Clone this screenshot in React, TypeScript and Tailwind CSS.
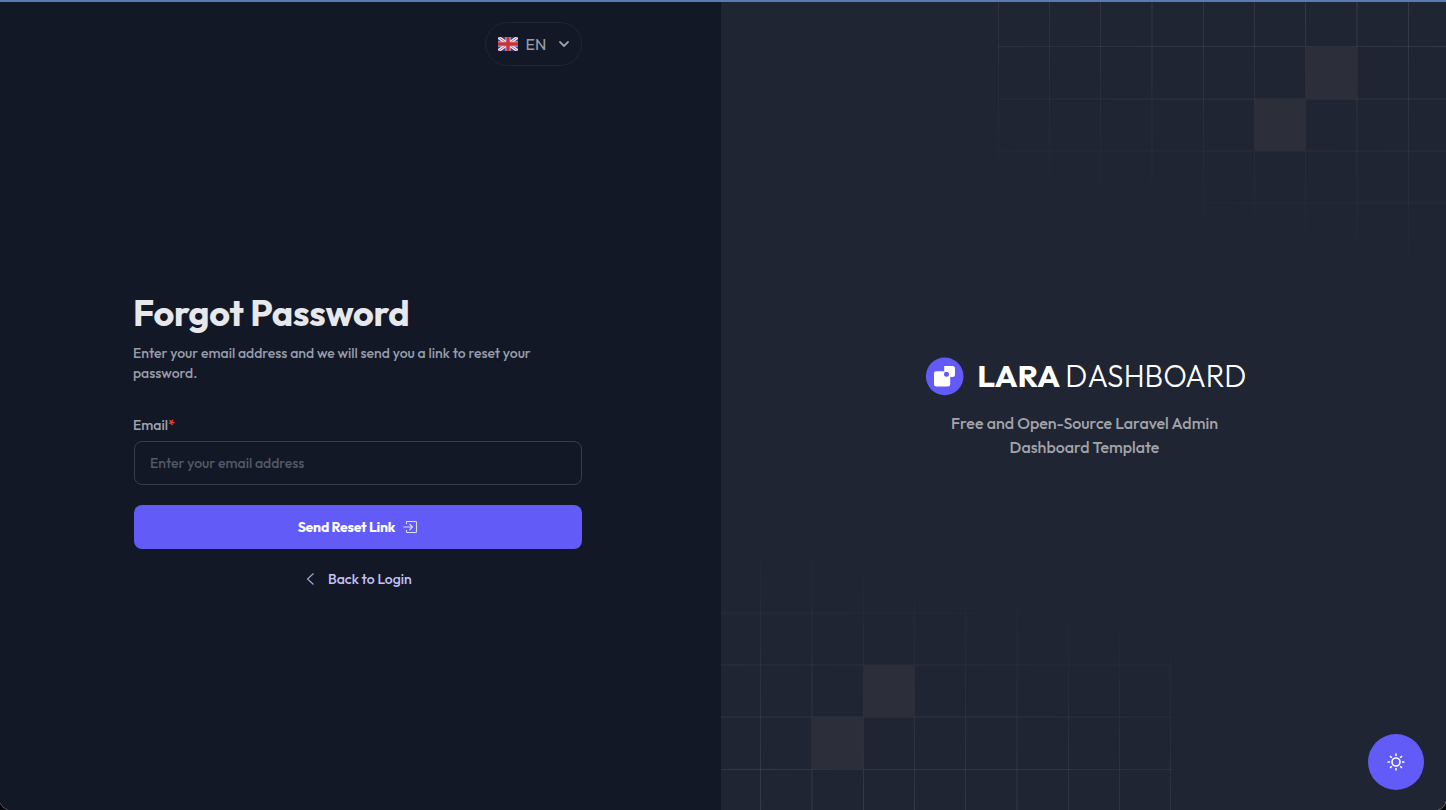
import React from "react";

const topColumns = [998.5, 1049.5, 1100.5, 1152, 1203.5, 1254.5, 1305.5, 1357, 1408.5];
const topRows = [46.5, 99, 151, 203];
const bottomColumns = [760.5, 812, 863.5, 914.5, 965.5, 1017, 1068.5, 1119.5, 1170.5];
const bottomRows = [613, 665, 717, 769.5];

// Lines on a whole pixel straddle two pixels, so they are drawn wider and fainter.
function Line({ at, from, to, vertical, stroke }: { at: number; from: number; to: number; vertical?: boolean; stroke: string }) {
  const wide = Number.isInteger(at);
  const w = wide ? 2 : 1;
  const pos = at - w / 2;
  return vertical ? (
    <rect x={pos} y={from} width={w} height={to - from} fill={stroke} opacity={wide ? 0.55 : 1} />
  ) : (
    <rect x={from} y={pos} width={to - from} height={w} fill={stroke} opacity={wide ? 0.55 : 1} />
  );
}

function GridPattern() {
  return (
    <svg className="pointer-events-none absolute inset-0" width="725" height="810" viewBox="721 0 725 810" aria-hidden="true">
      <defs>
        <linearGradient id="fadeTop" gradientUnits="userSpaceOnUse" x1="1446" y1="0" x2="1381" y2="278">
          <stop offset="0" stopColor="#b4acb8" stopOpacity="0.16" />
          <stop offset="1" stopColor="#b4acb8" stopOpacity="0" />
        </linearGradient>
        <linearGradient id="fadeBottom" gradientUnits="userSpaceOnUse" x1="721" y1="810" x2="786" y2="532">
          <stop offset="0" stopColor="#b4acb8" stopOpacity="0.16" />
          <stop offset="1" stopColor="#b4acb8" stopOpacity="0" />
        </linearGradient>
      </defs>
      {topColumns.map((x) => <Line key={x} at={x} from={0} to={256} vertical stroke="url(#fadeTop)" />)}
      {topRows.map((y) => <Line key={y} at={y} from={998} to={1446} stroke="url(#fadeTop)" />)}
      {bottomColumns.map((x) => <Line key={x} at={x} from={560} to={810} vertical stroke="url(#fadeBottom)" />)}
      {bottomRows.map((y) => <Line key={y} at={y} from={721} to={1171} stroke="url(#fadeBottom)" />)}
      <g fill="#2c2f39">
        <rect x="1305.5" y="46.5" width="51.5" height="52.5" />
        <rect x="1254.5" y="99" width="51" height="52" />
        <rect x="863.5" y="665" width="51" height="52" />
        <rect x="812" y="717" width="51.5" height="52.5" />
      </g>
    </svg>
  );
}

function Flag() {
  return (
    <svg width="20" height="14" viewBox="0 0 20 14" aria-hidden="true">
      <rect width="20" height="14" fill="#29449a" />
      <path d="M0 0L20 14M20 0L0 14" stroke="#eef0f6" strokeWidth="3.2" />
      <path d="M0 0L8 5.6M20 0L12 5.6M0 14L8 8.4M20 14L12 8.4" stroke="#d55a61" strokeWidth="1" />
      <path d="M10 0V14M0 7H20" stroke="#e9c9cd" strokeWidth="5" />
      <path d="M10 0V14M0 7H20" stroke="#c83238" strokeWidth="3.4" />
    </svg>
  );
}

function Logo() {
  return (
    <svg className="overflow-visible" width="322" height="40" viewBox="924 356 322 40" role="img">
      <circle cx="944.7" cy="376.4" r="18.8" fill="#635bf8" />
      <path d="M944.2 366H952.5Q955 366 955 368.5V374.5Q955 377 952.5 377H944.2Z" fill="white" />
      <path d="M936 371.3H943.9V372.5Q944 376.7 948 377H950.2V384Q950.2 386.5 947.7 386.5H936.5Q934 386.5 934 384V373.3Q934 371.3 936 371.3Z" fill="white" />
      <circle cx="946.5" cy="374.2" r="2.5" fill="#635bf8" />
      <text x="977.3" y="387" textLength="83" lengthAdjust="spacingAndGlyphs" className="font-[Outfit,Lato,sans-serif] text-[30.5px] font-bold" fill="white">LARA</text>
      <text x="1065.3" y="387" textLength="181" lengthAdjust="spacingAndGlyphs" className="font-[Outfit,Lato,sans-serif] text-[30.5px] font-light" fill="white">DASHBOARD</text>
    </svg>
  );
}

export default function App() {
  return (
    <div className="relative flex h-[810px] w-[1446px] overflow-hidden border-t-2 border-[#557cb3] bg-[#121826] font-[Outfit,Lato,sans-serif]">
      <main className="flex w-[721px] shrink-0 flex-col pl-[134px]">
        <div className="flex w-[448px] justify-end pt-5">
          <button className="flex h-11 w-[97px] items-center rounded-full border border-[#1f2532] pl-3 text-[#989daa]">
            <Flag />
            <span className="ml-[7px] w-[22px] text-base font-normal">EN</span>
            <svg className="ml-[11px]" width="12" height="12" viewBox="0 0 12 12" fill="none" stroke="currentColor" strokeWidth="1.8" strokeLinecap="round" strokeLinejoin="round"><path d="M2 4L6 8L10 4" /></svg>
          </button>
        </div>
        <form className="mt-[224px] w-[448px]" onSubmit={(e) => e.preventDefault()}>
          <h1 className="-ml-px h-[45px] whitespace-nowrap text-[36px] leading-[45px] font-bold tracking-[-0.25px] text-[#e6e8eb]">Forgot Password</h1>
          <p className="-ml-px mt-2 text-sm leading-5 font-medium whitespace-nowrap text-[#989daa]">
            Enter your email address and we will send you a link to reset your<br />password.
          </p>
          <label htmlFor="email" className="-ml-px mt-8 block text-sm leading-5 font-medium text-[#a0a5b1]">Email<span className="text-[#e84c3d]">*</span></label>
          <input id="email" type="email" placeholder="Enter your email address" className="mt-[6px] block h-11 w-full rounded-lg border border-[#373e4b] bg-transparent px-[15px] text-sm font-medium text-white outline-none placeholder:text-[#535965]" />
          <button className="mt-5 flex h-11 w-full items-center justify-center gap-2 rounded-lg bg-[#635bf8] text-sm font-bold tracking-[-0.2px] text-white">
            <span>Send Reset Link</span>
            <svg width="15" height="14" viewBox="0 0 15 14" fill="none" stroke="#dedcff" strokeWidth="1.1"><path d="M3.5 4V2.2Q3.5 1.5 4.2 1.5H12.8Q13.5 1.5 13.5 2.2V11.8Q13.5 12.5 12.8 12.5H4.2Q3.5 12.5 3.5 11.8V10M0.5 7H9M6.5 4L9.5 7L6.5 10" /></svg>
          </button>
          <a href="#login" className="mt-5 flex h-5 items-center pl-[172px] text-sm font-medium text-[#c4c1fc]">
            <svg width="9" height="14" viewBox="0 0 9 14" fill="none" stroke="#aaa8d8" strokeWidth="1.1"><path d="M7.5 1.5L1.5 7L7.5 12.5" /></svg>
            <span className="ml-[13px]">Back to Login</span>
          </a>
        </form>
      </main>
      <aside className="relative flex flex-1 flex-col items-center bg-[#1f2532]">
        <div className="absolute inset-x-0 -top-[2px] h-[810px] overflow-hidden"><GridPattern /></div>
        <div className="relative mt-[354px] ml-[2px] flex w-[322px] flex-col items-center">
          <Logo />
          <p className="mt-[15px] text-center text-base leading-6 font-medium whitespace-nowrap text-[#a3a4aa]">Free and Open-Source Laravel Admin<br />Dashboard Template</p>
        </div>
      </aside>
      <button aria-label="Toggle theme" className="absolute right-[22px] bottom-5 flex size-14 items-center justify-center rounded-full bg-[#635bf8]">
        <svg width="20" height="20" viewBox="0 0 20 20" fill="none" stroke="white" strokeWidth="1.6"><circle cx="10" cy="10" r="4" /><path d="M10 1.5V4M10 16V18.5M1.5 10H4M16 10H18.5M4 4L5.7 5.7M14.3 14.3L16 16M4 16L5.7 14.3M14.3 5.7L16 4" /></svg>
      </button>
      <svg className="pointer-events-none absolute bottom-0 left-0" width="10" height="10" aria-hidden="true"><path d="M0 3Q2 8 8 10H0Z" fill="#050608" /><path d="M0 3Q2 8 8 10" fill="none" stroke="#4b505a" /></svg>
      <svg className="pointer-events-none absolute right-0 bottom-0" width="10" height="10" aria-hidden="true"><path d="M10 1Q9 8 2 10H10Z" fill="#050608" /><path d="M10 1Q9 8 2 10" fill="none" stroke="#5d626b" /></svg>
    </div>
  );
}
